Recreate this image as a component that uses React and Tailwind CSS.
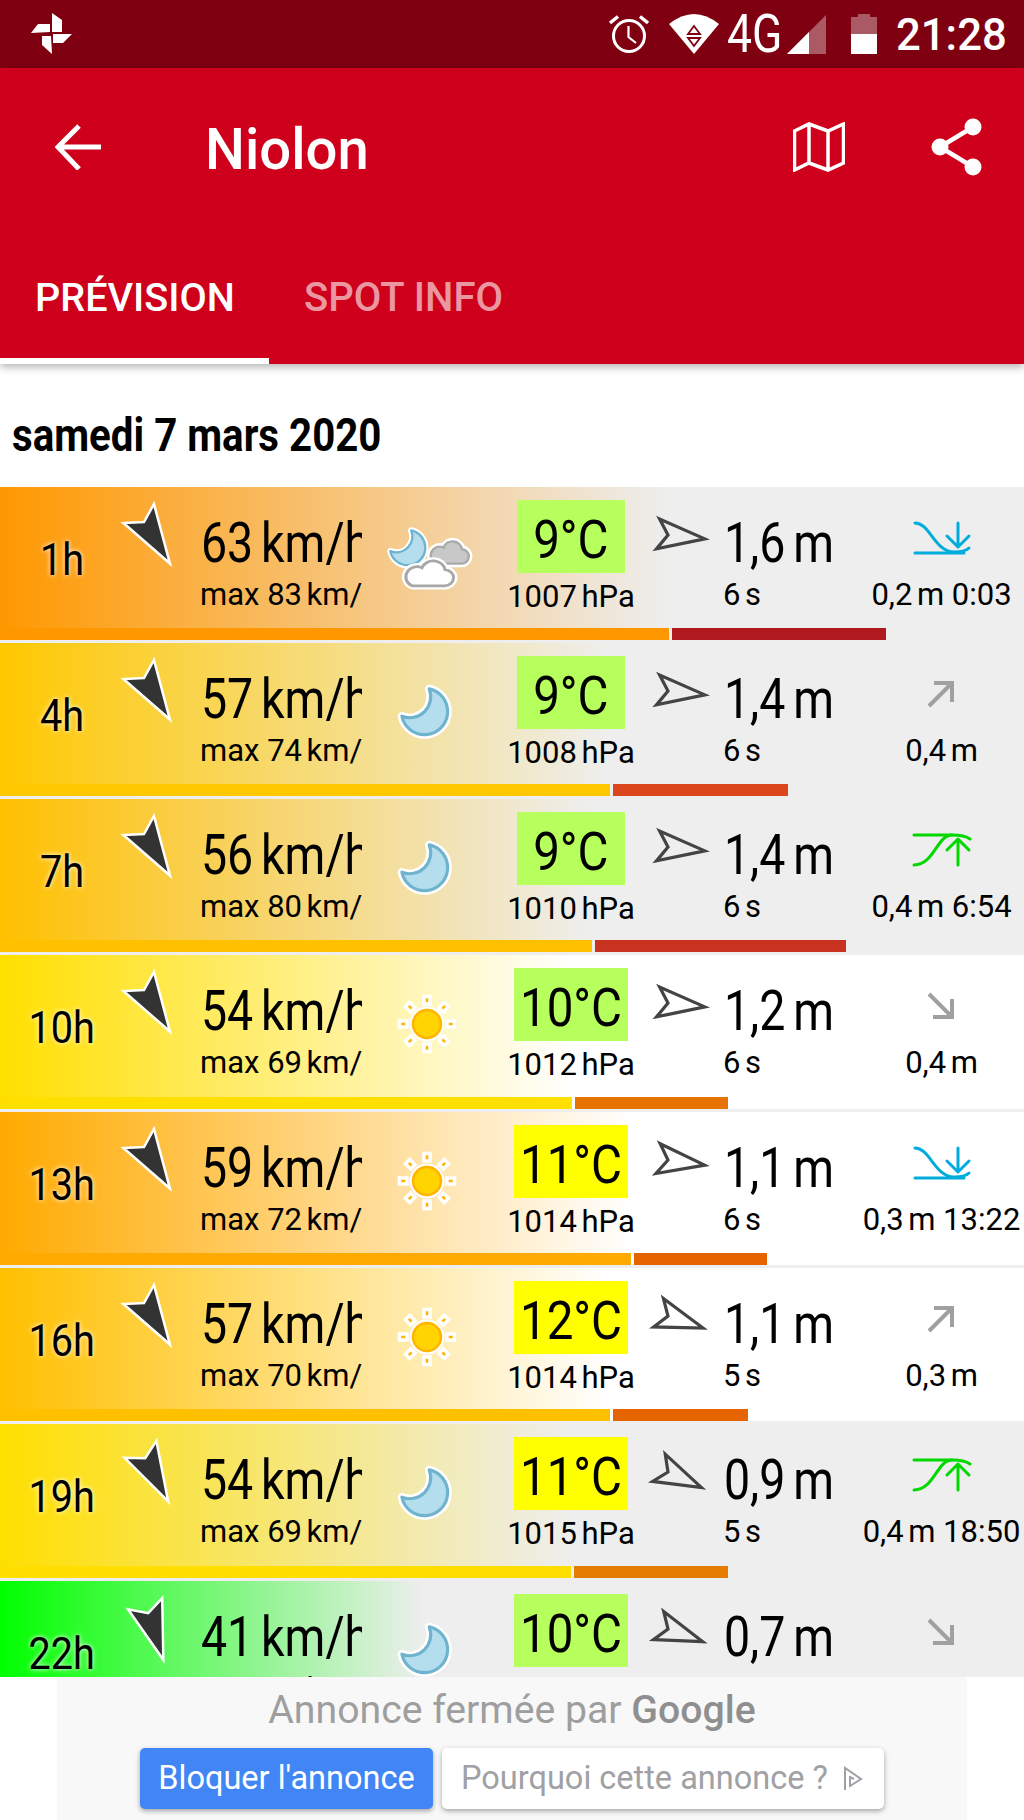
import React from "react";

const rows = [
  { h: "1h", w: 63, m: 83, wa: 58, wx: "cloud", t: "9°C", tc: "#b6ff5c", p: 1007, sa: 6, s: "1,6", sp: 6, tide: "down", tv: "0,2", tt: "0:03", c: "#ff9800", bw: 669, wc: "#b0191e", wend: 886, bg: "#eeeeee" },
  { h: "4h", w: 57, m: 74, wa: 58, wx: "moon", t: "9°C", tc: "#b6ff5c", p: 1008, sa: 6, s: "1,4", sp: 6, tide: "ne", tv: "0,4", c: "#ffc800", bw: 610, wc: "#dc461c", wend: 788, bg: "#eeeeee" },
  { h: "7h", w: 56, m: 80, wa: 58, wx: "moon", t: "9°C", tc: "#b6ff5c", p: 1010, sa: 6, s: "1,4", sp: 6, tide: "up", tv: "0,4", tt: "6:54", c: "#ffc000", bw: 592, wc: "#c8321e", wend: 846, bg: "#eeeeee" },
  { h: "10h", w: 54, m: 69, wa: 58, wx: "sun", t: "10°C", tc: "#b6ff5c", p: 1012, sa: 6, s: "1,2", sp: 6, tide: "se", tv: "0,4", c: "#ffdf00", bw: 572, wc: "#e67300", wend: 728, bg: "#ffffff" },
  { h: "13h", w: 59, m: 72, wa: 58, wx: "sun", t: "11°C", tc: "#ffff00", p: 1014, sa: 8, s: "1,1", sp: 6, tide: "down", tv: "0,3", tt: "13:22", c: "#ffaa00", bw: 631, wc: "#e66400", wend: 767, bg: "#ffffff" },
  { h: "16h", w: 57, m: 70, wa: 58, wx: "sun", t: "12°C", tc: "#ffff00", p: 1014, sa: 19, s: "1,1", sp: 5, tide: "ne", tv: "0,3", c: "#ffc000", bw: 610, wc: "#e66400", wend: 748, bg: "#ffffff" },
  { h: "19h", w: 54, m: 69, wa: 62, wx: "moon", t: "11°C", tc: "#ffff00", p: 1015, sa: 25, s: "0,9", sp: 5, tide: "up", tv: "0,4", tt: "18:50", c: "#ffdf00", bw: 571, wc: "#e67d00", wend: 728, bg: "#eeeeee" },
  { h: "22h", w: 41, m: 54, wa: 72, wx: "moon", t: "10°C", tc: "#b6ff5c", p: 1016, sa: 20, s: "0,7", sp: 5, tide: "se", tv: "0,3", c: "#00ff00", bw: 425, wc: "#78c800", wend: 560, bg: "#eeeeee" },
];

function WindArrow({ a }) {
  const ox = 20 + (a - 58) * 0.3;
  const oy = 35 - (a - 58) * 0.2;
  return (
    <svg width="76" height="120" viewBox="0 0 76 120" className="overflow-visible shrink-0">
      <g transform={`translate(${ox} ${oy}) rotate(${a})`}>
        <polygon points="49,0 -10,-18 0,0 -10,18" fill="#333333" stroke="#ffffff" strokeWidth="2.5" strokeLinejoin="miter" />
      </g>
    </svg>
  );
}

function SwellArrow({ a }) {
  return (
    <svg width="70" height="120" viewBox="0 0 70 120" className="overflow-visible shrink-0">
      <g transform={`translate(18 48) rotate(${a})`}>
        <polygon points="37,0 -10,-15 0,0 -10,15" fill="none" stroke="#444444" strokeWidth="3.2" strokeLinejoin="miter" />
      </g>
    </svg>
  );
}

const moonPath = "M-22 4 A 22 22 0 1 0 4 -22 A 20 20 0 0 1 -22 4 Z";
const cloudPath = "M-18 12 H14 A9 9 0 0 0 15 -6 A12 12 0 0 0 -8 -8 A10 10 0 0 0 -18 12 Z";

function Weather({ kind }) {
  if (kind === "moon") {
    return (
      <svg width="70" height="70" viewBox="-33 -35 70 70" className="shrink-0">
        <g transform="scale(1.05)">
          <path d={moonPath} fill="#fff" stroke="#fff" strokeWidth="8" strokeLinejoin="round" />
          <path d={moonPath} fill="#b4deed" stroke="#6fb3cf" strokeWidth="3" strokeLinejoin="round" />
        </g>
      </svg>
    );
  }
  if (kind === "sun") {
    const rays = [0, 45, 90, 135, 180, 225, 270, 315];
    return (
      <svg width="70" height="70" viewBox="-35 -35 70 70" className="shrink-0">
        {rays.map((r) => (
          <rect key={r} x="-3" y="-27.5" width="6" height="7.5" transform={`rotate(${r})`} fill="#ffb400" stroke="#fff" strokeWidth="3.5" />
        ))}
        <circle r="17.5" fill="#fff" />
        <circle r="14" fill="#ffd400" stroke="#ffb400" strokeWidth="2.5" />
      </svg>
    );
  }
  return (
    <svg width="90" height="70" viewBox="-45 -35 90 70" className="shrink-0 overflow-visible">
      <g transform="translate(-19 -8) scale(0.8)">
        <path d={moonPath} fill="#fff" stroke="#fff" strokeWidth="8" strokeLinejoin="round" />
        <path d={moonPath} fill="#b4deed" stroke="#6fb3cf" strokeWidth="3" strokeLinejoin="round" />
      </g>
      <g transform="translate(23 -2) scale(0.8)">
        <path d={cloudPath} fill="#fff" stroke="#fff" strokeWidth="9" strokeLinejoin="round" />
        <path d={cloudPath} fill="#c8c8c8" stroke="#aaaaaa" strokeWidth="3" />
      </g>
      <g transform="translate(3 19) scale(1 0.9)">
        <path d={cloudPath} fill="#fff" stroke="#fff" strokeWidth="8" strokeLinejoin="round" />
        <path d={cloudPath} fill="#fff" stroke="#a8a8a8" strokeWidth="3" />
      </g>
    </svg>
  );
}

function TideIcon({ kind }) {
  if (kind === "down") {
    return (
      <svg width="60" height="40" viewBox="-30 -20 60 40" fill="none" stroke="#00acdc" strokeWidth="3" strokeLinecap="round" strokeLinejoin="round">
        <path d="M-27 -15 C-12 -15 -8 13 12 14 C18 14 24 13 27 10" />
        <path d="M-27 15 H22" />
        <path d="M16 -15 V8 M5 -2 L16 9 L27 -2" />
      </svg>
    );
  }
  if (kind === "up") {
    return (
      <svg width="60" height="40" viewBox="-30 -20 60 40" fill="none" stroke="#00d800" strokeWidth="3" strokeLinecap="round" strokeLinejoin="round">
        <path d="M-28 15 C-8 15 -5 -15 10 -15 C18 -15 24 -14 28 -11" />
        <path d="M-28 -15 H10" />
        <path d="M16 15 V-10 M5 0 L16 -11 L27 0" />
      </svg>
    );
  }
  return (
    <svg width="60" height="40" viewBox="-30 -20 60 40" fill="none" stroke="#a0a0a0" strokeWidth="4">
      <g transform={kind === "se" ? "translate(-1 0) rotate(90)" : "translate(-1 0)"}>
        <path d="M-12 12 L11 -11 M-7 -11 H11 V8" />
      </g>
    </svg>
  );
}

function Big({ children }) {
  return (
    <span className="inline-block origin-left scale-x-[0.83] text-[56px] leading-[56px] whitespace-nowrap text-black [word-spacing:-0.08em]">
      {children}
    </span>
  );
}

function Row({ r }) {
  return (
    <div className="mb-[3px] h-[153.3px] shrink-0 flex flex-col" style={{ backgroundColor: r.bg, backgroundImage: `linear-gradient(to right, ${r.c}, transparent)`, backgroundSize: `${r.bw}px 100%`, backgroundRepeat: "no-repeat" }}>
      <div className="flex h-[141.3px] overflow-hidden">
        <div className="w-[124px] shrink-0 pt-[50px] text-center">
          <span className="inline-block scale-x-[0.88] text-[45px] leading-[45px] text-black [text-shadow:0_0_6px_#ffffff]">{r.h}</span>
        </div>
        <WindArrow a={r.wa} />
        <div className="w-[162px] shrink-0 overflow-hidden pt-[28px] whitespace-nowrap">
          <div className="h-[56px] pl-[1px]"><Big>{r.w} km/h</Big></div>
          <div className="mt-[8px] text-[31px] leading-[31px] text-black">max <span className="[word-spacing:-0.1em]">{r.m} km/h</span></div>
        </div>
        <div className="flex w-[130px] shrink-0 justify-center pt-[34px]">
          <Weather kind={r.wx} />
        </div>
        <div className="flex w-[158px] shrink-0 flex-col items-center pt-[13px]">
          <div className="flex h-[73px] min-w-[108px] items-center justify-center px-[7px] pt-[7px]" style={{ backgroundColor: r.tc }}>
            <span className="-mx-[8px] inline-block scale-x-[0.88] text-[54px] leading-[54px] text-black">{r.t}</span>
          </div>
          <div className="mt-[8px] text-[31px] leading-[31px] whitespace-nowrap text-black [word-spacing:-0.1em]">{r.p} hPa</div>
        </div>
        <SwellArrow a={r.sa} />
        <div className="w-[140px] shrink-0 pl-[3px] pt-[28px]">
          <div className="h-[56px] pl-[1px]"><Big>{r.s} m</Big></div>
          <div className="mt-[8px] text-[31px] leading-[31px] text-black [word-spacing:-0.1em]">{r.sp} s</div>
        </div>
        <div className="flex w-[163px] shrink-0 flex-col items-center pt-[31px]">
          <TideIcon kind={r.tide} />
          <div className="mt-[22px] text-[31px] leading-[30px] whitespace-nowrap text-black">
            <span className="[word-spacing:-0.1em]">{r.tv} m</span>
            {r.tt ? ` ${r.tt}` : ""}
          </div>
        </div>
      </div>
      <div className="flex h-[12px] shrink-0">
        <div className="h-full" style={{ width: r.bw, backgroundColor: r.c }} />
        <div className="ml-[3px] h-full" style={{ width: r.wend - r.bw - 3, backgroundColor: r.wc }} />
      </div>
    </div>
  );
}

function StatusBar() {
  return (
    <div className="flex h-[68px] shrink-0 items-center justify-between bg-[#7f0011] pl-[31px] pr-[17px]">
      <svg width="42" height="42" viewBox="31 13 42 42" fill="#ffffff">
        <polygon points="52,13 62,20 62,32 52,32" />
        <polygon points="72,34 63,43 53,43 53,34" />
        <polygon points="52,54 42,45 42,36 51,36" />
        <polygon points="31,33 38,24 50,24 50,32" />
      </svg>
      <div className="flex items-center text-white">
        <svg width="42" height="40" viewBox="0 0 40 40" fill="none" stroke="#fff" strokeWidth="3">
          <circle cx="20" cy="22" r="15.5" />
          <path d="M19.5 12 V23 L27 29" strokeWidth="2.2" />
          <path d="M1 9 L9 2.5 M39 9 L31 2.5" strokeWidth="3.5" />
        </svg>
        <svg width="50" height="40" viewBox="0 0 50 40" className="ml-[19px]">
          <path d="M0 10 Q25 -10 50 10 L25 40 Z" fill="#fff" />
          <path d="M25 12 L31 20 H19 Z M25 32 L19 24 H31 Z" fill="none" stroke="#7f0011" strokeWidth="1.8" />
        </svg>
        <span className="ml-[8px] inline-block w-[51px] origin-left scale-x-[0.84] text-[53px] leading-[53px] whitespace-nowrap">4G</span>
        <svg width="41" height="39" viewBox="0 0 39 39" className="ml-[8px]">
          <polygon points="0,39 39,0 39,39" fill="#ffffff" fillOpacity="0.35" />
          <polygon points="0,39 22,17 22,39" fill="#ffffff" />
        </svg>
        <svg width="26" height="40" viewBox="0 0 26 40" className="ml-[24px]">
          <path d="M0 3 H7 V0 H19 V3 H26 V20 H0 Z" fill="#ffffff" fillOpacity="0.35" />
          <rect x="0" y="20" width="26" height="20" fill="#ffffff" />
        </svg>
        <span className="ml-[19px] inline-block w-[111px] origin-left scale-x-[0.97] text-[45px] font-medium leading-[45px] whitespace-nowrap">21:28</span>
      </div>
    </div>
  );
}

function AppBar() {
  return (
    <div className="relative z-10 h-[296px] shrink-0 bg-[#ce001b] shadow-[0_3px_8px_rgba(0,0,0,0.3)]">
      <div className="flex h-[158px] items-center pl-[55px] pr-[42px]">
        <svg width="46" height="46" viewBox="0 0 46 46" fill="none" stroke="#fff" strokeWidth="5" className="shrink-0">
          <path d="M46 23 H4 M24 2 L3 23 L24 45" />
        </svg>
        <span className="ml-[104px] inline-block w-[168px] origin-left scale-x-[0.97] pt-[4px] text-[58px] font-medium leading-[58px] text-white">Niolon</span>
        <svg width="52" height="50" viewBox="0 0 52 50" fill="none" stroke="#fff" strokeWidth="3.5" className="ml-auto shrink-0">
          <path d="M1.5 9 L16 2 L35 9 L50.5 2 V41 L35 48 L16 41 L1.5 48 Z M16 2 V41 M35 9 V48" />
        </svg>
        <svg width="52" height="58" viewBox="0 0 52 58" className="ml-[85px] shrink-0">
          <circle cx="43" cy="9" r="8.5" fill="#fff" />
          <circle cx="10" cy="29" r="8.5" fill="#fff" />
          <circle cx="43" cy="49" r="8.5" fill="#fff" />
          <path d="M43 9 L10 29 L43 49" fill="none" stroke="#fff" strokeWidth="4.5" />
        </svg>
      </div>
      <div className="flex h-[138px] items-start">
        <div className="relative h-full w-[269px] pl-[35px] pt-[49px]">
          <span className="text-[39.6px] font-medium leading-[46px] text-white">PRÉVISION</span>
          <div className="absolute bottom-0 left-0 h-[6px] w-full bg-white" />
        </div>
        <div className="pl-[35px] pt-[49px] text-[40px] font-medium leading-[46px] text-white/60">SPOT INFO</div>
      </div>
    </div>
  );
}

function AdBar() {
  return (
    <div className="z-20 flex h-[143px] shrink-0 justify-center bg-white">
      <div className="flex w-[910px] flex-col items-center bg-[#f8f8f8]">
        <div className="mt-[8px] flex h-[50px] items-center whitespace-nowrap text-[39.2px] leading-[50px] text-[#9e9e9e]">
          <span>Annonce fermée par <span className="font-medium text-[#8f8f8f]">Google</span></span>
        </div>
        <div className="mt-[13px] flex gap-[9px]">
          <div className="flex h-[61px] w-[293px] items-center justify-center rounded-[5px] bg-[#4285f4] text-[32.5px] text-white shadow-[0_2px_5px_rgba(0,0,0,0.35)]">
            <span className="whitespace-nowrap">Bloquer l'annonce</span>
          </div>
          <div className="flex h-[61px] w-[442px] items-center rounded-[5px] bg-white pl-[19px] text-[32.5px] text-[#a0a0a5] shadow-[0_2px_5px_rgba(0,0,0,0.35)]">
            <span className="inline-block w-[366px] whitespace-nowrap">Pourquoi cette annonce ?</span>
            <svg width="20" height="26" viewBox="0 0 20 26" fill="none" stroke="#a0a0a5" strokeWidth="2" className="ml-[16px]">
              <path d="M2 24 V2 L18 13 L7 20 V11 L11 13" />
            </svg>
          </div>
        </div>
      </div>
    </div>
  );
}

export default function App() {
  return (
    <div className="flex h-[1820px] w-[1024px] flex-col overflow-hidden bg-white font-[Roboto,sans-serif]">
      <StatusBar />
      <AppBar />
      <div className="flex min-h-0 flex-1 flex-col overflow-hidden">
        <div className="flex h-[122.5px] shrink-0 items-center pl-[12px] pt-[20px] text-[46px] font-bold leading-[50px] text-black">
          <span className="inline-block origin-left scale-x-[0.875] whitespace-nowrap">samedi 7 mars 2020</span>
        </div>
        <div className="flex-1 bg-[#eeeeee]">
          {rows.map((r) => (
            <Row key={r.h} r={r} />
          ))}
        </div>
      </div>
      <AdBar />
    </div>
  );
}
